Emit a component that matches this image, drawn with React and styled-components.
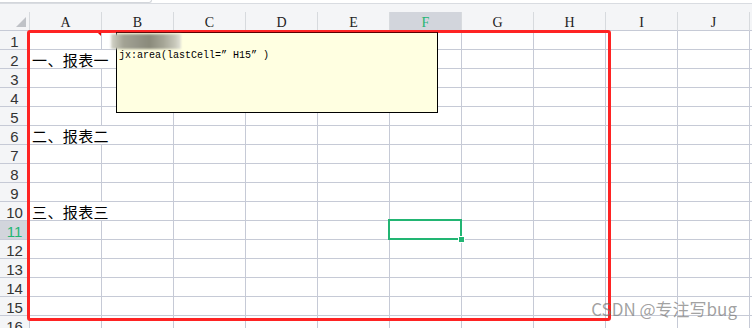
import React from "react";
import styled, { createGlobalStyle } from "styled-components";

const Global = createGlobalStyle`
  html, body { margin: 0; padding: 0; background: #ffffff; }
  body { font-family: "Liberation Sans", Arial, sans-serif; }
`;

const GRID = "#c6cad6";
const HEAD_BG = "#f4f5f7";
const HEAD_SEL = "#d2d5dc";
const GREEN = "#22b573";

const Page = styled.div`
  position: relative;
  width: 752px;
  height: 328px;
  overflow: hidden;
  background: #fff;
`;

const TopBar = styled.div`
  height: 3px;
  background: #fff;
  border-bottom: 1px solid #d9dce1;
`;

const FormulaBox = styled.div`
  width: 151px;
  height: 2px;
  border: 1px solid #d3d6db;
  border-top: none;
  border-left: none;
  border-radius: 0 0 3px 0;
`;

const HeaderSpacer = styled.div`
  height: 8px;
  background: ${HEAD_BG};
`;

const Sheet = styled.div`
  display: grid;
  grid-template-columns: 30px repeat(11, 72px);
  grid-auto-rows: 19px;
`;

const Corner = styled.div`
  background: ${HEAD_BG};
  border-right: 1px solid #d7dade;
  border-bottom: 1px solid ${GRID};
  position: relative;
  &::after {
    content: "";
    position: absolute;
    right: 3px;
    bottom: 3px;
    width: 0;
    height: 0;
    border-left: 10px solid transparent;
    border-bottom: 10px solid #bfc2c7;
  }
`;

const ColHead = styled.div`
  background: ${(p) => (p.$sel ? HEAD_SEL : HEAD_BG)};
  border-right: 1px solid #d7dade;
  border-bottom: 1px solid ${GRID};
  display: flex;
  align-items: center;
  justify-content: center;
  padding-top: 3px;
  box-sizing: border-box;
  font-family: "Liberation Serif", "DejaVu Serif", serif;
  font-size: 14px;
  color: ${(p) => (p.$sel ? GREEN : "#222")};
`;

const RowHead = styled.div`
  background: ${(p) => (p.$sel ? HEAD_SEL : HEAD_BG)};
  border-right: 1px solid ${(p) => (p.$sel ? GREEN : GRID)};
  border-bottom: 1px solid ${GRID};
  display: flex;
  align-items: center;
  justify-content: center;
  padding-top: 3px;
  box-sizing: border-box;
  font-family: "Liberation Sans", Arial, sans-serif;
  font-size: 15px;
  color: ${(p) => (p.$sel ? GREEN : "#333")};
`;

const Cell = styled.div`
  border-right: 1px solid ${GRID};
  border-bottom: 1px solid ${GRID};
  grid-column: span ${(p) => p.$span || 1};
  display: flex;
  align-items: center;
  padding-left: 2px;
  white-space: nowrap;
  overflow: visible;
  font-family: "Noto Sans CJK SC", "Liberation Sans", sans-serif;
  font-size: 15px;
  letter-spacing: 0.4px;
  color: #000;
`;

const Frame = styled.div`
  position: absolute;
  left: 27px;
  top: 30px;
  width: 578px;
  height: 285px;
  border: 3px solid #fe2323;
  border-radius: 3px;
  pointer-events: none;
`;

const Selection = styled.div`
  position: absolute;
  left: 388px;
  top: 219px;
  width: 70px;
  height: 17px;
  border: 2px solid ${GREEN};
`;

const Handle = styled.div`
  position: absolute;
  left: 458px;
  top: 236px;
  width: 5px;
  height: 5px;
  background: ${GREEN};
  border: 1px solid #fff;
`;

const Comment = styled.div`
  position: absolute;
  left: 116px;
  top: 32px;
  width: 320px;
  height: 79px;
  background: #ffffe1;
  border: 1px solid #000;
  border-top-color: #5a0000;
`;

const Author = styled.div`
  position: absolute;
  left: -6px;
  top: 1px;
  width: 70px;
  height: 15px;
  background: linear-gradient(
    90deg,
    #d4d4c8 0%,
    #a3a394 18%,
    #97978a 35%,
    #8a8a7b 55%,
    #a6a697 75%,
    #c9c9bc 92%,
    #e3e3d9 100%
  );
  filter: blur(1px);
`;

const CommentText = styled.div`
  padding: 17px 0 0 2px;
  font-family: "Liberation Mono", "DejaVu Sans Mono", monospace;
  font-size: 10px;
  line-height: 12px;
  color: #000;
  white-space: pre;
`;

const Marker = styled.div`
  position: absolute;
  left: 96px;
  top: 31px;
  width: 0;
  height: 0;
  border-top: 5px solid #e00000;
  border-left: 5px solid transparent;
`;

const Watermark = styled.div`
  position: absolute;
  right: 15px;
  top: 296px;
  font-family: "Noto Sans CJK SC", "Liberation Sans", sans-serif;
  font-size: 17px;
  color: rgba(120, 120, 120, 0.7);
  white-space: nowrap;
`;

const COLS = ["A", "B", "C", "D", "E", "F", "G", "H", "I", "J", ""];
const TEXT = { 2: "一、报表一", 6: "二、报表二", 10: "三、报表三" };
const SEL_ROW = 11;
const SEL_COL = 5;

export default function App() {
  const rows = Array.from({ length: 16 }, (_, i) => i + 1);
  return (
    <Page>
      <Global />
      <TopBar>
        <FormulaBox />
      </TopBar>
      <HeaderSpacer />
      <Sheet>
        <Corner />
        {COLS.map((c, i) => (
          <ColHead key={"h" + i} $sel={i === SEL_COL}>
            {c}
          </ColHead>
        ))}
        {rows.map((r) => (
          <React.Fragment key={r}>
            <RowHead $sel={r === SEL_ROW}>{r}</RowHead>
            {TEXT[r] ? (
              <>
                <Cell $span={2}>{TEXT[r]}</Cell>
                {COLS.slice(2).map((c, i) => (
                  <Cell key={c + i} />
                ))}
              </>
            ) : (
              COLS.map((c, i) => <Cell key={c + i} />)
            )}
          </React.Fragment>
        ))}
      </Sheet>
      <Marker />
      <Frame />
      <Selection />
      <Handle />
      <Comment>
        <Author />
        <CommentText>{"jx:area(lastCell=” H15” )"}</CommentText>
      </Comment>
      <Watermark>CSDN @专注写bug</Watermark>
    </Page>
  );
}
